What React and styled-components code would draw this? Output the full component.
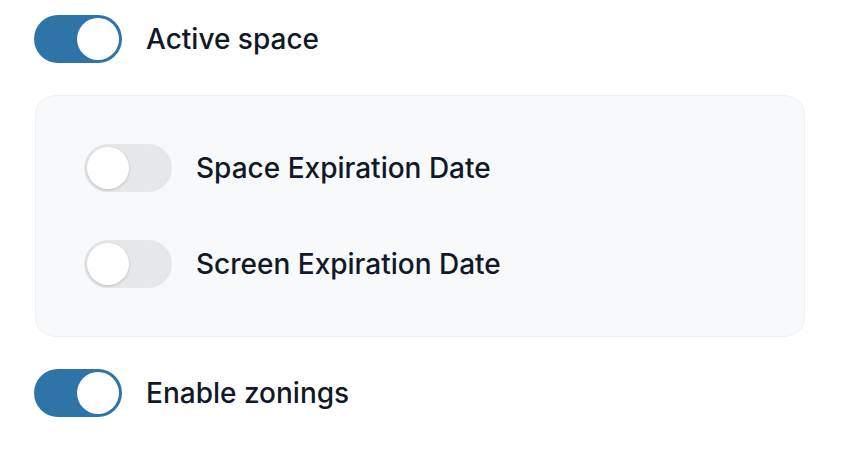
import React, { useState } from 'react';
import styled, { createGlobalStyle } from 'styled-components';

const GlobalStyle = createGlobalStyle`
  body {
    margin: 0;
    background: #ffffff;
    font-family: Inter, "Noto Sans", "Liberation Sans", sans-serif;
    -webkit-font-smoothing: antialiased;
  }
`;

const Page = styled.div`
  display: flex;
  flex-direction: column;
  gap: 32px;
  padding: 15px 53px 0 34px;
`;

const Row = styled.label`
  display: flex;
  align-items: center;
  gap: 24px;
  cursor: pointer;
`;

const Track = styled.span`
  position: relative;
  flex-shrink: 0;
  width: 88px;
  height: 48px;
  border-radius: 24px;
  background-color: ${({ $on }) => ($on ? '#2f74a8' : '#e5e7eb')};
  transition: background-color 0.15s;
`;

const Knob = styled.span`
  position: absolute;
  top: 3px;
  left: ${({ $on }) => ($on ? '43px' : '3px')};
  width: 42px;
  height: 42px;
  border-radius: 50%;
  background: #ffffff;
  box-shadow: ${({ $on }) => ($on ? 'none' : '0 1px 3px rgba(0, 0, 0, 0.18)')};
  transition: left 0.15s;
`;

const Label = styled.span`
  font-size: 28px;
  line-height: 34px;
  font-weight: 500;
  color: #111827;
  letter-spacing: 0;
`;

const Card = styled.div`
  display: flex;
  flex-direction: column;
  gap: 48px;
  padding: 48px;
  background-color: #f8f9fb;
  border: 1px solid #eef0f3;
  border-radius: 20px;
  margin-left: 1px;
`;

const Toggle = ({ on, onChange, children }) => (
  <Row onClick={onChange}>
    <Track $on={on}>
      <Knob $on={on} />
    </Track>
    <Label>{children}</Label>
  </Row>
);

const App = () => {
  const [active, setActive] = useState(true);
  const [spaceExp, setSpaceExp] = useState(false);
  const [screenExp, setScreenExp] = useState(false);
  const [zonings, setZonings] = useState(true);

  return (
    <>
      <GlobalStyle />
      <Page>
        <Toggle on={active} onChange={() => setActive(v => !v)}>Active space</Toggle>

        <Card>
          <Toggle on={spaceExp} onChange={() => setSpaceExp(v => !v)}>Space Expiration Date</Toggle>
          <Toggle on={screenExp} onChange={() => setScreenExp(v => !v)}>Screen Expiration Date</Toggle>
        </Card>

        <Toggle on={zonings} onChange={() => setZonings(v => !v)}>Enable zonings</Toggle>
      </Page>
    </>
  );
};

export default App;
